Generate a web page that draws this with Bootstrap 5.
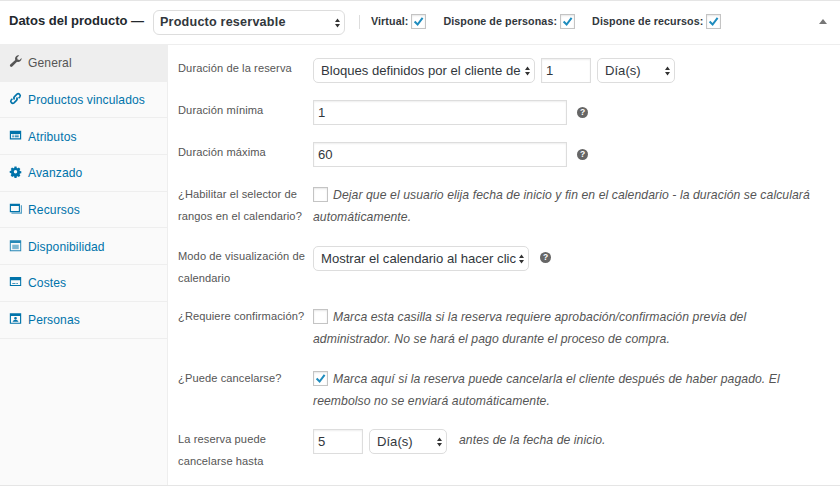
<!DOCTYPE html>
<html lang="es">
<head>
<meta charset="utf-8">
<title>Datos del producto</title>
<link href="https://cdn.jsdelivr.net/npm/bootstrap@5.3.0/dist/css/bootstrap.min.css" rel="stylesheet">
<style>
html,body{height:486px;overflow:hidden;background:#fff}
body{font-family:"Liberation Sans",Arial,sans-serif;color:#555;font-size:12px}
.panel-box{height:486px;border-top:1px solid #e5e5e5;border-bottom:1px solid #e5e5e5;display:flex;flex-direction:column}
.panel-head{height:44px;flex:none;border-bottom:1px solid #eee;padding-left:9px;padding-right:12px}
.panel-title{font-size:13px;font-weight:700;color:#23282d;width:144px;flex:none;white-space:nowrap;margin-bottom:3px}
.head-sep{width:1px;height:14px;background:#ddd;margin:0 11px 2px 14px}
.head-lbl{font-size:10.7px;font-weight:700;color:#32373c;white-space:nowrap;letter-spacing:.1px;margin-bottom:2px}
.head-lbl+.head-lbl{margin-left:17px}
.panel-body{flex:1;min-height:0}
.side-tabs{width:168px;flex:none;background:#fafafa;border-right:1px solid #eee}
.side-tab{height:36.7px;display:flex;align-items:center;padding:1px 0 0 9px;color:#0073aa;font-size:12.1px;text-decoration:none;border-bottom:1px solid #eee;letter-spacing:.1px}
.side-tab svg{width:13px;height:13px;margin:0 6px 3px 0;flex:none;fill:#0073aa}
.side-tab.is-on{background:#eee;color:#555}
.side-tab.is-on svg{fill:#555}
.form-zone{padding:13px 0 0 10px;flex:1;min-width:0}
.frow{display:flex;margin-bottom:17px}
.frow.wide{margin-bottom:18px}
.flabel{width:135px;flex:none;font-size:11.1px;line-height:21.5px;color:#555;letter-spacing:.1px}
.ctl{height:25px;font-size:13.1px;color:#32373c;box-shadow:inset 0 1px 2px rgba(0,0,0,.07)}
input.ctl{border:1px solid #ddd;border-radius:0;padding:0 4px;background:#fff}
input.ctl:focus{box-shadow:none;border-color:#ddd}
select.ctl{border:1px solid #ddd;border-radius:5px;padding:0 12px 0 7px;background-color:#fff;box-shadow:none;background-size:5px 10px;background-position:right 4px center;background-image:url("data:image/svg+xml,%3Csvg xmlns='http://www.w3.org/2000/svg' viewBox='0 0 6 11'%3E%3Cpath fill='%23333' d='M3 0l3 4.400H0zM3 11L0 6.600h6z'/%3E%3C/svg%3E")}
select.head-sel{width:192px;height:25px;font-weight:700;font-size:12.6px;letter-spacing:.2px;padding-left:6px;border-radius:6px}
.w-long{width:222px}.w-unit{width:78px}.w-num{width:50px}.w-full{width:254px}.w-cal{width:216px}
.w-unit-b{width:78px}
input.tick[type=checkbox]{width:15px;height:15px;margin:0;border:1px solid #c4c4c4;border-radius:0;background-color:#fff;box-shadow:inset 0 1px 2px rgba(0,0,0,.1);flex:none;vertical-align:-3px}
input.tick[type=checkbox]:checked{background-color:#fff;border-color:#c4c4c4;background-size:13px 13px;background-image:url("data:image/svg+xml,%3Csvg xmlns='http://www.w3.org/2000/svg' viewBox='0 0 13 13'%3E%3Cpath fill='none' stroke='%231e8cbe' stroke-width='2' d='M2.600 6.500l3 3L10.600 2.800'/%3E%3C/svg%3E")}
.head-lbl input.tick[type=checkbox]{margin-left:3px}
.fnote{font-style:italic;font-size:12.2px;line-height:22px;color:#555;width:506px;letter-spacing:.08px}
.fnote input.tick[type=checkbox]{margin-right:5px}
.tip{width:11px;height:11px;border-radius:50%;background:#666;color:#fff;font-size:8.5px;font-weight:700;line-height:11px;text-align:center;flex:none}
.fold{width:0;height:0;border-left:4px solid transparent;border-right:4px solid transparent;border-bottom:5px solid #777;margin-left:auto;margin-right:1px;margin-bottom:2px}
</style>
</head>
<body>
<div class="panel-box">
  <div class="panel-head d-flex align-items-center">
    <span class="panel-title">Datos del producto —</span>
    <select class="form-select ctl head-sel" aria-label="Tipo de producto"><option>Producto reservable</option></select>
    <span class="head-sep"></span>
    <label class="head-lbl d-flex align-items-center">Virtual:<input class="form-check-input tick" type="checkbox" checked></label>
    <label class="head-lbl d-flex align-items-center">Dispone de personas:<input class="form-check-input tick" type="checkbox" checked></label>
    <label class="head-lbl d-flex align-items-center">Dispone de recursos:<input class="form-check-input tick" type="checkbox" checked></label>
    <span class="fold"></span>
  </div>
  <div class="panel-body d-flex">
    <nav class="side-tabs">
      <a class="side-tab is-on" href="#"><svg viewBox="0 0 16 16"><path d="M15.500 4.200a4.200 4.200 0 0 1-5.600 4L4 14.200a1.700 1.700 0 0 1-2.400-2.400L7.700 6a4.200 4.200 0 0 1 4.900-5.500L10 3.100l.5 2.500 2.500.5 2.400-2.500z"/></svg>General</a>
      <a class="side-tab" href="#"><svg viewBox="0 0 16 16"><path fill="none" stroke="#0073aa" stroke-width="2" d="M6.800 9.200a2.500 2.500 0 0 1 0-3.500l3-3a2.500 2.500 0 0 1 3.500 3.500l-1.500 1.500M9.200 6.800a2.500 2.500 0 0 1 0 3.500l-3 3a2.500 2.500 0 0 1-3.500-3.500l1.500-1.500"/></svg>Productos vinculados</a>
      <a class="side-tab" href="#"><svg viewBox="0 0 16 16"><path fill-rule="evenodd" d="M1 2h14v11H1zM2.500 6v5.500h11V6zM4 7h2v1H4zM4 9h2v1H4zM7 7h5v1H7zM7 9h5v1H7z"/></svg>Atributos</a>
      <a class="side-tab" href="#"><svg viewBox="0 0 16 16"><path fill-rule="evenodd" d="M6.500 1h3l.4 2 1.200.5L12.900 2.400 15 4.500l-1.100 1.800.5 1.200 2 .4v-.1 2.800l-2 .4-.5 1.200 1.100 1.800-2.100 2.100-1.800-1.100-1.200.5-.4 2h-3l-.4-2-1.200-.5-1.800 1.100L1 13.500l1.100-1.800-.5-1.200-2-.4V7.300l2-.4.5-1.200L1 4.500l2.100-2.100 1.800 1.100 1.200-.5zM8 6a2.500 2.500 0 1 0 0 5 2.500 2.500 0 0 0 0-5z" transform="translate(1.200 1.100) scale(.85)"/></svg>Avanzado</a>
      <a class="side-tab" href="#"><svg viewBox="0 0 16 16"><path fill-rule="evenodd" d="M1 2h12.500v10.500H1zM2.400 5v6.100h9.700V5z"/><path opacity=".65" d="M14.500 4H16v10.500H3V13h11.500z"/></svg>Recursos</a>
      <a class="side-tab" href="#"><svg viewBox="0 0 16 16"><path fill-rule="evenodd" opacity=".85" d="M1 1.500h14v13.500H1zM2.200 5v8.800h11.600V5z"/><path opacity=".5" d="M4 7h8v5.500H4z"/></svg>Disponibilidad</a>
      <a class="side-tab" href="#"><svg viewBox="0 0 16 16"><path fill-rule="evenodd" d="M1 2.500h14v11H1zM2.300 6.500v5.700h11.400V6.500zM4 10h4v1H4zM9 10h2v1H9z"/></svg>Costes</a>
      <a class="side-tab" href="#"><svg viewBox="0 0 16 16"><path fill-rule="evenodd" d="M1 1.500h14v13H1zM2.400 5v8.100h11.200V5zM8 6a1.700 1.700 0 1 1 0 3.400A1.700 1.700 0 0 1 8 6zM4.500 12c0-1.700 1.500-2.200 3.500-2.200s3.500.5 3.500 2.200z"/></svg>Personas</a>
    </nav>
    <div class="form-zone">
      <div class="frow">
        <div class="flabel">Duración de la reserva</div>
        <div class="d-flex" style="gap:6px">
          <select class="form-select ctl w-long" aria-label="Tipo"><option>Bloques definidos por el cliente de</option></select>
          <input class="form-control ctl w-num" value="1" aria-label="Duración">
          <select class="form-select ctl w-unit" aria-label="Unidad"><option>Día(s)</option></select>
        </div>
      </div>
      <div class="frow">
        <div class="flabel">Duración mínima</div>
        <div class="d-flex align-items-center">
          <input class="form-control ctl w-full" value="1" aria-label="Duración mínima">
          <span class="tip" style="margin-left:10px">?</span>
        </div>
      </div>
      <div class="frow">
        <div class="flabel">Duración máxima</div>
        <div class="d-flex align-items-center">
          <input class="form-control ctl w-full" value="60" aria-label="Duración máxima">
          <span class="tip" style="margin-left:10px">?</span>
        </div>
      </div>
      <div class="frow wide">
        <div class="flabel">¿Habilitar el selector de rangos en el calendario?</div>
        <div class="fnote"><input class="form-check-input tick" type="checkbox" aria-label="Rangos">Dejar que el usuario elija fecha de inicio y fin en el calendario - la duración se calculará automáticamente.</div>
      </div>
      <div class="frow">
        <div class="flabel">Modo de visualización de calendario</div>
        <div class="d-flex align-items-start">
          <select class="form-select ctl w-cal" aria-label="Modo"><option>Mostrar el calendario al hacer clic</option></select>
          <span class="tip" style="margin:6px 0 0 11px">?</span>
        </div>
      </div>
      <div class="frow wide">
        <div class="flabel">¿Requiere confirmación?</div>
        <div class="fnote"><input class="form-check-input tick" type="checkbox" aria-label="Confirmación">Marca esta casilla si la reserva requiere aprobación/confirmación previa del administrador. No se hará el pago durante el proceso de compra.</div>
      </div>
      <div class="frow">
        <div class="flabel">¿Puede cancelarse?</div>
        <div class="fnote"><input class="form-check-input tick" type="checkbox" checked aria-label="Cancelar">Marca aquí si la reserva puede cancelarla el cliente después de haber pagado. El reembolso no se enviará automáticamente.</div>
      </div>
      <div class="frow">
        <div class="flabel">La reserva puede cancelarse hasta</div>
        <div class="d-flex align-items-start" style="gap:6px">
          <input class="form-control ctl w-num" value="5" aria-label="Plazo">
          <select class="form-select ctl w-unit-b" aria-label="Unidad"><option>Día(s)</option></select>
          <span class="fnote" style="width:auto;margin-left:6px">antes de la fecha de inicio.</span>
        </div>
      </div>
    </div>
  </div>
</div>
<script src="https://cdn.jsdelivr.net/npm/bootstrap@5.3.0/dist/js/bootstrap.bundle.min.js"></script>
</body>
</html>
